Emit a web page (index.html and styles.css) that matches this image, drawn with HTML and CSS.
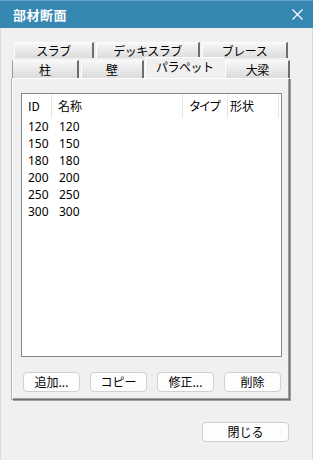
FILE: index.html
```html
<!DOCTYPE html>
<html lang="ja">
<head>
    <meta charset="UTF-8">
    <title>部材断面</title>
    <link rel="stylesheet" href="styles.css">
</head>
<body>
    <div class="window">
        <!-- タイトルバー -->
        <div class="titlebar">
            <span class="title">部材断面</span>
            <svg class="close" width="11" height="11" viewBox="0 0 11 11">
                <path d="M0.5 0.5 L10.5 10.5 M10.5 0.5 L0.5 10.5" stroke="#fff" stroke-width="1.2" fill="none"/>
            </svg>
        </div>

        <div class="client">
            <div class="tabctl">
                <div class="tabrow back">
                    <div class="tab w80">スラブ</div>
                    <div class="tab w104">デッキスラブ</div>
                    <div class="tab w86">ブレース</div>
                </div>
                <div class="tabrow front">
                    <div class="tab w66">柱</div>
                    <div class="tab w64">壁</div>
                    <div class="tab w80 active">パラペット</div>
                    <div class="tab w65">大梁</div>
                </div>

                <div class="panel">
                    <div class="listview">
                        <div class="lv-head">
                            <div class="col c-id">ID</div>
                            <div class="col c-name">名称</div>
                            <div class="col c-type">タイプ</div>
                            <div class="col c-shape">形状</div>
                        </div>
                        <div class="lv-row"><span class="c-id">120</span><span>120</span></div>
                        <div class="lv-row"><span class="c-id">150</span><span>150</span></div>
                        <div class="lv-row"><span class="c-id">180</span><span>180</span></div>
                        <div class="lv-row"><span class="c-id">200</span><span>200</span></div>
                        <div class="lv-row"><span class="c-id">250</span><span>250</span></div>
                        <div class="lv-row"><span class="c-id">300</span><span>300</span></div>
                    </div>

                    <div class="buttons">
                        <button class="btn">追加...</button>
                        <button class="btn">コピー</button>
                        <button class="btn">修正...</button>
                        <button class="btn">削除</button>
                    </div>
                </div>
            </div>

            <div class="footer">
                <button class="btn close-btn">閉じる</button>
            </div>
        </div>
    </div>
</body>
</html>
```

FILE: styles.css
```css
/* 全体 */
body, html {
    margin: 0;
    padding: 0;
    background: #f0f0f0;
    font-family: "Noto Sans CJK JP", "Noto Sans", sans-serif;
    font-size: 12px;
    color: #000;
}

.window {
    width: 313px;
    height: 460px;
    display: flex;
    flex-direction: column;
    background: #f0f0f0;
    box-sizing: border-box;
    border-left: 1px solid #dadada;
    border-right: 1px solid #dadada;
}

/* タイトルバー */
.titlebar {
    height: 28px;
    flex-shrink: 0;
    display: flex;
    align-items: center;
    justify-content: space-between;
    padding: 0 10px 0 13px;
    background: #3688b2;
    border-top: 1px solid #62a6c9;
    box-sizing: border-box;
    margin: 0 -1px;
}

.title {
    color: #fff;
    font-weight: bold;
    font-size: 13px;
    letter-spacing: 0.5px;
}

/* タブコントロール */
.client {
    padding: 14px 0 0 11px;
    display: flex;
    flex-direction: column;
}

.tabctl {
    width: 278px;
    display: flex;
    flex-direction: column;
}

.tabrow {
    display: flex;
}

.tabrow.back {
    height: 16px;
    padding-left: 2px;
    gap: 2px;
}

.tabrow.front {
    height: 21px;
    margin-top: -1px;
    align-items: flex-end;
    gap: 2px;
}

.tab {
    box-sizing: border-box;
    height: 100%;
    display: flex;
    align-items: center;
    justify-content: center;
    background: linear-gradient(#f7f7f7, #dcdcdc);
    border-top: 1px solid #fdfdfd;
    border-left: 1px solid #fdfdfd;
    border-right: 2px solid #6e6e6e;
    font-size: 12px;
    line-height: 1;
    letter-spacing: -0.5px;
}

.tabrow.front .tab {
    height: 18px;
}

.tabrow.front .tab:first-child {
    border-left: 1px solid #9a9a9a;
}

.tabrow.front .tab.active {
    height: 21px;
    background: #f0f0f0;
    border-left: 1px solid #fff;
    border-right: 1px solid #f0f0f0;
    margin: 0 -1px 0 -1px;
    padding-bottom: 3px;
    position: relative;
    z-index: 1;
}

.w64 { width: 64px; }
.w65 { width: 65px; }
.w66 { width: 67px; }
.w80 { width: 80px; }
.w86 { width: 86px; }
.w104 { width: 104px; }

.panel {
    box-sizing: border-box;
    height: 322px;
    background: #f0f0f0;
    border-top: 1px solid #fff;
    border-left: 1px solid #fff;
    border-right: 1px solid #6e6e6e;
    border-bottom: 1px solid #6e6e6e;
    box-shadow: 1px 1px 0 #a0a0a0, inset -1px -1px 0 #a0a0a0, -1px 0 0 #b4b4b4;
    padding: 14px 8px 0 8px;
    display: flex;
    flex-direction: column;
}

/* リストビュー */
.listview {
    width: 261px;
    height: 264px;
    box-sizing: border-box;
    background: #fff;
    border: 1px solid #828790;
}

.lv-head {
    display: flex;
    height: 24px;
    align-items: stretch;
}

.col {
    display: flex;
    align-items: center;
    border-right: 1px solid #e5e5e5;
    box-sizing: border-box;
    padding-left: 6px;
    padding-bottom: 1px;
}

.lv-head .c-id { width: 30px; }
.c-name { width: 131px; }
.c-type { width: 45px; padding-left: 6px; letter-spacing: -2px; }
.c-shape { width: 51px; padding-left: 2px; }

.lv-row {
    display: flex;
    height: 17px;
    align-items: center;
    padding-left: 6px;
    font-family: "Noto Sans", sans-serif;
    font-size: 12px;
}

.lv-row:first-of-type {
    margin-top: 1px;
}

.lv-row .c-id {
    width: 31px;
}

/* ボタン */
.buttons {
    display: flex;
    gap: 10px;
    margin-top: 15px;
    padding-left: 2px;
}

.btn {
    width: 57px;
    height: 20px;
    padding: 0;
    background: #fdfdfd;
    border: 1px solid #d0d0d0;
    border-radius: 4px;
    font-family: "Noto Sans CJK JP", "Noto Sans", sans-serif;
    font-size: 12px;
    line-height: 1;
    color: #000;
}

.footer {
    display: flex;
    justify-content: flex-end;
    padding-right: 23px;
    margin-top: 22px;
}

.close-btn {
    width: 87px;
}
```
